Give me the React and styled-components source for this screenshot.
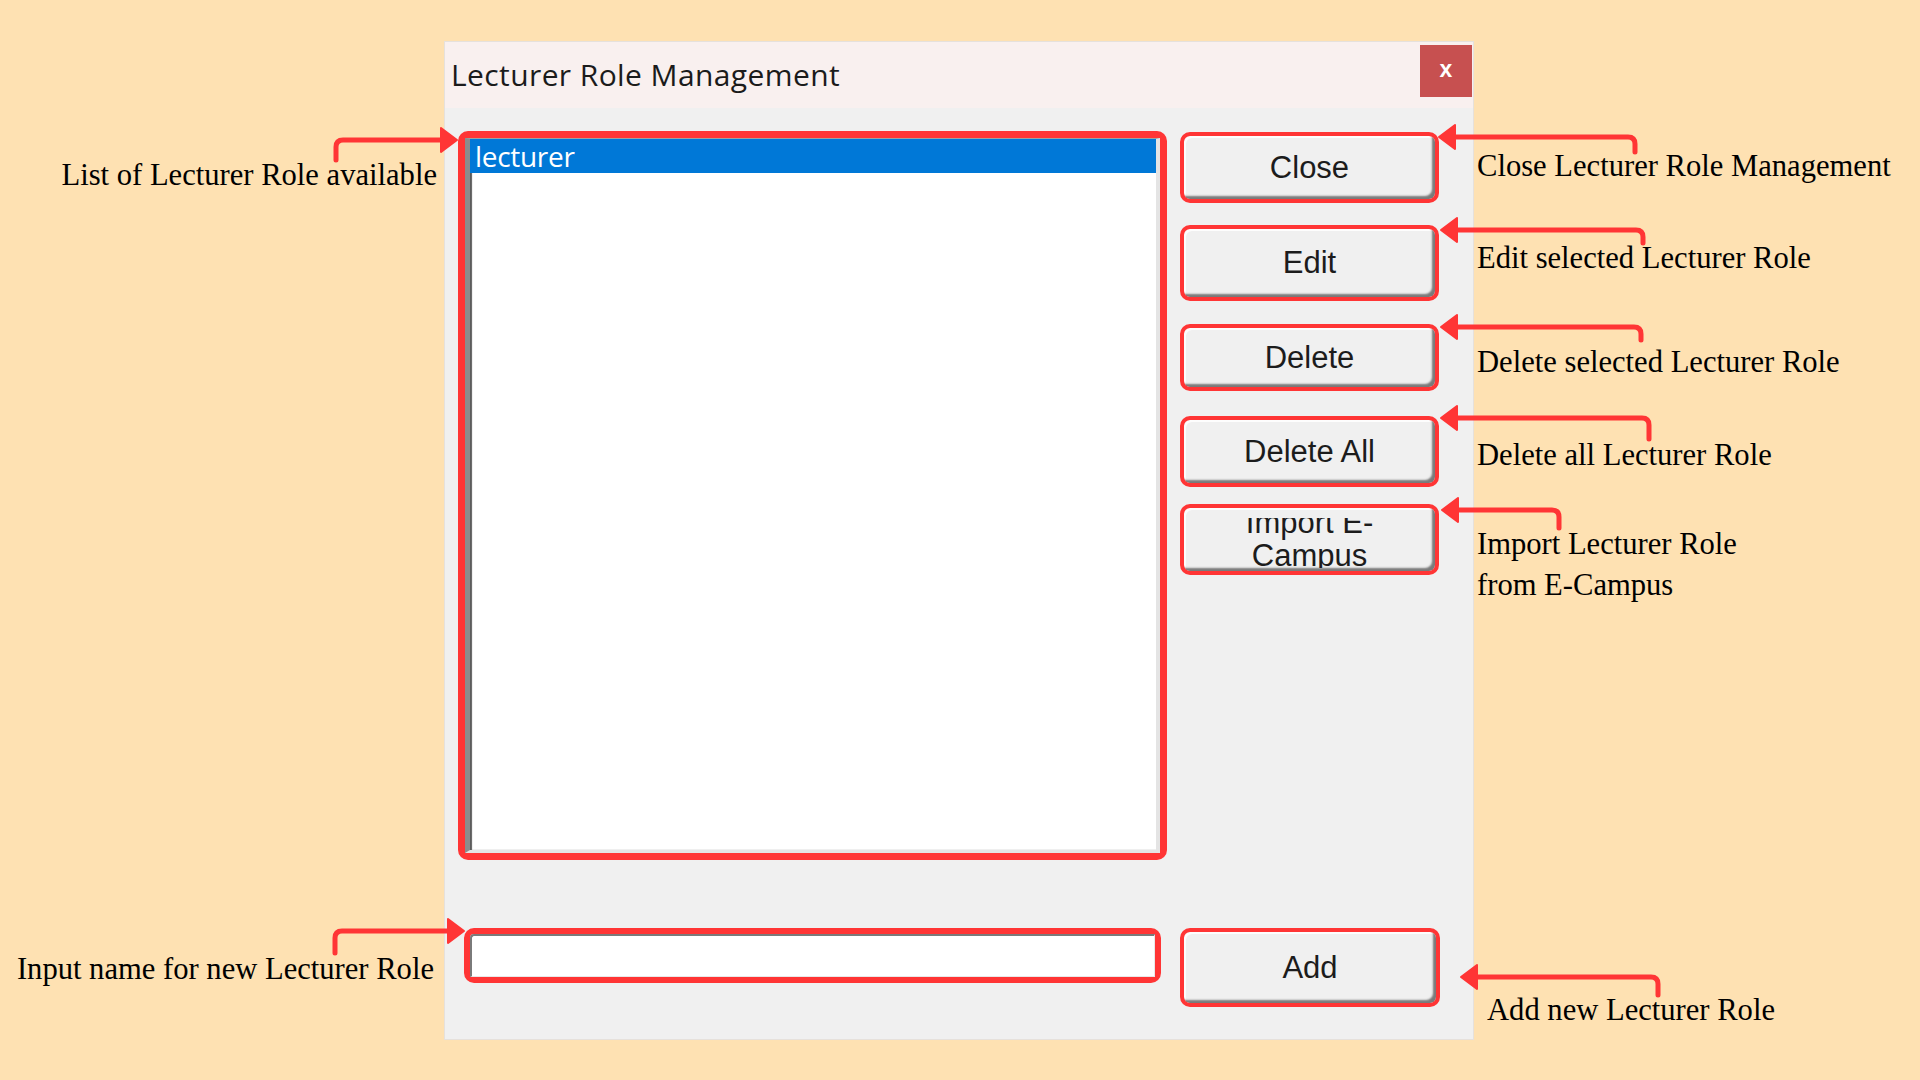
import React from 'react';
import styled, { createGlobalStyle } from 'styled-components';

const GlobalStyle = createGlobalStyle`
    html, body {
        margin: 0;
        padding: 0;
        background: #fee1b2;
    }
`;

const RED = '#ff3535';

// arrows: stem end, corner, and tip. dir = 1 points right, -1 points left
const arrows = [
    { sx: 336, sy: 160, y: 140, tip: 457, dir: 1 },
    { sx: 335, sy: 953, y: 931, tip: 464, dir: 1 },
    { sx: 1635, sy: 152, y: 137, tip: 1439, dir: -1 },
    { sx: 1643, sy: 243, y: 230, tip: 1441, dir: -1 },
    { sx: 1641, sy: 340, y: 327, tip: 1441, dir: -1 },
    { sx: 1649, sy: 439, y: 418, tip: 1441, dir: -1 },
    { sx: 1559, sy: 528, y: 510, tip: 1442, dir: -1 },
    { sx: 1658, sy: 995, y: 977, tip: 1461, dir: -1 },
];

const Arrow = ({ sx, sy, y, tip, dir }) => {
    const r = 7;
    const base = tip - dir * 16;
    return (
        <g>
            <path
                d={`M ${sx} ${sy} V ${y + r} Q ${sx} ${y} ${sx + dir * r} ${y} H ${base + dir * 2}`}
                fill="none"
                stroke={RED}
                strokeWidth="5"
                strokeLinecap="round"
            />
            <polygon
                points={`${base},${y - 12} ${tip},${y} ${base},${y + 12}`}
                fill={RED}
                stroke={RED}
                strokeWidth="2"
                strokeLinejoin="round"
            />
        </g>
    );
};

const App = () => {
    return (
        <>
            <GlobalStyle />
            <Page>
                <LeftNotes>
                    <Note $top={155} $pr={7}>List of Lecturer Role available</Note>
                    <Note $top={753} $pr={10}>Input name for new Lecturer Role</Note>
                </LeftNotes>

                <Dialog>
                    <TitleBar>
                        <Title>Lecturer Role Management</Title>
                        <CloseX>x</CloseX>
                    </TitleBar>
                    <Body>
                        <TopRow>
                            <ListFrame>
                                <ListBox>
                                    <ListItem $selected>lecturer</ListItem>
                                </ListBox>
                            </ListFrame>
                            <ButtonColumn>
                                <Btn $h={71} $mt={1}>Close</Btn>
                                <Btn $h={76} $mt={22}>Edit</Btn>
                                <Btn $h={67} $mt={23}>Delete</Btn>
                                <Btn $h={71} $mt={25}>Delete All</Btn>
                                <Btn $h={71} $mt={17}>
                                    <Clip>
                                        <span>Import E-<br />Campus</span>
                                    </Clip>
                                </Btn>
                            </ButtonColumn>
                        </TopRow>
                        <BottomRow>
                            <InputFrame>
                                <TextInput type="text" />
                            </InputFrame>
                            <Btn $h={79} $w={260}>Add</Btn>
                        </BottomRow>
                    </Body>
                </Dialog>

                <RightNotes>
                    <Note $top={146}>Close Lecturer Role Management</Note>
                    <Note $top={51}>Edit selected Lecturer Role</Note>
                    <Note $top={63}>Delete selected Lecturer Role</Note>
                    <Note $top={52}>Delete all Lecturer Role</Note>
                    <Note $top={48}>Import Lecturer Role<br />from E-Campus</Note>
                    <Note $top={384} $pl={10}>Add new Lecturer Role</Note>
                </RightNotes>

                <Overlay width="1920" height="1080" viewBox="0 0 1920 1080">
                    {arrows.map((a, i) => (
                        <Arrow key={i} {...a} />
                    ))}
                </Overlay>
            </Page>
        </>
    );
};

const Page = styled.div`
    position: relative;
    width: 1920px;
    height: 1080px;
    overflow: hidden;
    display: flex;
    align-items: flex-start;
    background: #fee1b2;
`;

const LeftNotes = styled.div`
    width: 444px;
    flex-shrink: 0;
    display: flex;
    flex-direction: column;
    align-items: flex-end;
`;

const RightNotes = styled.div`
    flex: 1;
    padding-left: 3px;
    display: flex;
    flex-direction: column;
    align-items: flex-start;
`;

const Note = styled.div`
    margin-top: ${(p) => p.$top || 0}px;
    padding-right: ${(p) => p.$pr || 0}px;
    padding-left: ${(p) => p.$pl || 0}px;
    font-family: 'Liberation Serif', 'Times New Roman', serif;
    font-size: 30.6px;
    line-height: 41px;
    color: #000;
    white-space: nowrap;
`;

const Dialog = styled.div`
    margin-top: 41px;
    width: 1030px;
    height: 999px;
    flex-shrink: 0;
    box-sizing: border-box;
    background: #f0f0f0;
    border: 1px solid #e6e1dc;
    display: flex;
    flex-direction: column;
`;

const TitleBar = styled.div`
    height: 66px;
    background: #f9f0ef;
    display: flex;
    align-items: center;
    justify-content: space-between;
    padding: 0 1px 0 6px;
    box-sizing: border-box;
`;

const Title = styled.div`
    font-family: 'Open Sans', 'Noto Sans', sans-serif;
    font-size: 30px;
    letter-spacing: 0.4px;
    color: #1b1b1b;
    margin-top: -2px;
`;

const CloseX = styled.div`
    width: 52px;
    height: 52px;
    align-self: flex-start;
    margin-top: 3px;
    background: #c75050;
    color: #fff;
    display: flex;
    align-items: center;
    justify-content: center;
    font-family: 'Liberation Sans', Arial, sans-serif;
    font-weight: bold;
    font-size: 23px;
    padding-bottom: 4px;
    box-sizing: border-box;
`;

const Body = styled.div`
    flex: 1;
    display: flex;
    flex-direction: column;
`;

const TopRow = styled.div`
    display: flex;
    align-items: flex-start;
    gap: 13px;
    padding: 23px 0 0 13px;
`;

const ListFrame = styled.div`
    width: 709px;
    height: 729px;
    box-sizing: border-box;
    border: 7px solid ${RED};
    border-radius: 10px;
    display: flex;
`;

const ListBox = styled.div`
    flex: 1;
    background: #fff;
    border-left: 5px solid #8c8c8c;
    border-right: 4px solid #e4e4e4;
    border-bottom: 3px solid #e4e4e4;
    border-top: 1px solid #a0a0a0;
    box-shadow: inset 2px 0 1px #5c5c5c;
`;

const ListItem = styled.div`
    height: 34px;
    line-height: 34px;
    padding-left: 5px;
    font-family: 'Open Sans', 'Noto Sans', sans-serif;
    font-size: 28px;
    color: ${(p) => (p.$selected ? '#fff' : '#000')};
    background: ${(p) => (p.$selected ? '#0078d7' : 'transparent')};
    letter-spacing: -0.3px;
`;

const ButtonColumn = styled.div`
    display: flex;
    flex-direction: column;
`;

const Btn = styled.button`
    margin-top: ${(p) => p.$mt || 0}px;
    width: ${(p) => p.$w || 259}px;
    height: ${(p) => p.$h}px;
    box-sizing: border-box;
    border: 4px solid ${RED};
    border-radius: 10px;
    background: #f0f0f0;
    box-shadow: inset -4px -4px 2px -1px #7a7a7a, inset 2px 2px 0 #fdfdfd;
    display: flex;
    align-items: center;
    justify-content: center;
    padding: 0;
    font-family: 'Liberation Sans', Arial, sans-serif;
    font-size: 31px;
    color: #1c1c1c;
    cursor: pointer;
`;

// the reference clips the wrapped label inside the button
const Clip = styled.span`
    display: flex;
    flex-direction: column;
    justify-content: center;
    box-sizing: border-box;
    height: 50px;
    padding-bottom: 8px;
    margin-top: 6px;
    overflow: hidden;
    line-height: 33px;
    text-align: center;
`;

const BottomRow = styled.div`
    display: flex;
    align-items: flex-start;
    gap: 19px;
    margin-top: 68px;
    padding-left: 19px;
`;

const InputFrame = styled.div`
    width: 697px;
    height: 55px;
    box-sizing: border-box;
    border: 6px solid ${RED};
    border-radius: 10px;
    display: flex;
`;

const TextInput = styled.input`
    flex: 1;
    min-width: 0;
    margin: 0;
    padding: 0 6px;
    border: none;
    border-top: 2px solid #7a7a7a;
    border-left: 2px solid #7a7a7a;
    border-bottom: 1px solid #e8e8e8;
    border-right: 1px solid #e8e8e8;
    border-radius: 4px 0 0 0;
    background: #fff;
    outline: none;
    font-family: 'Liberation Sans', Arial, sans-serif;
    font-size: 28px;
`;

const Overlay = styled.svg`
    position: absolute;
    left: 0;
    top: 0;
    pointer-events: none;
`;

export default App;
